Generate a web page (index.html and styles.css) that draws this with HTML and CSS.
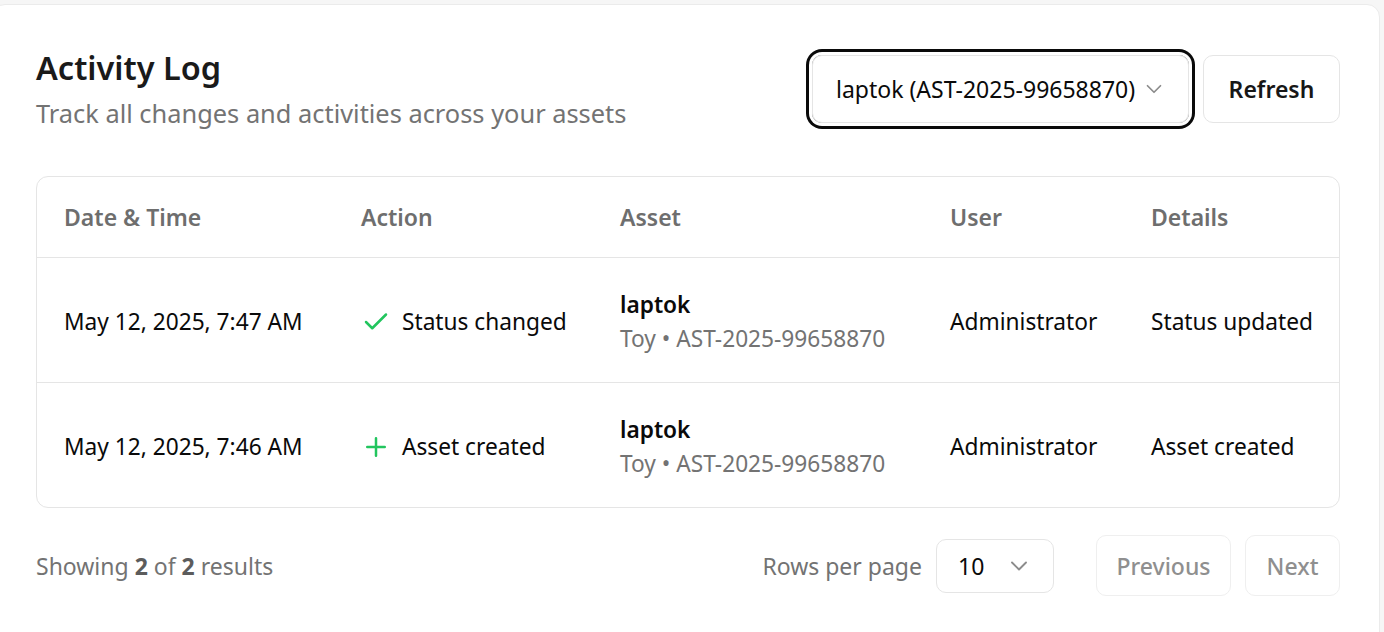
FILE: index.html
```html
<!DOCTYPE html>
<html lang="en">
<head>
<meta charset="utf-8">
<title>Activity Log</title>
<link rel="stylesheet" href="styles.css">
</head>
<body>
<div class="page">
  <section class="card">
    <header class="head">
      <div class="titles">
        <h1 class="title">Activity Log</h1>
        <p class="subtitle">Track all changes and activities across your assets</p>
      </div>
      <div class="controls">
        <div class="asset-select">
          <span class="sel-text">laptok (AST-2025-99658870)</span>
          <svg class="chev" viewBox="0 0 24 24" width="26" height="26"><path d="m6 9 6 6 6-6"/></svg>
        </div>
        <button class="btn refresh">Refresh</button>
      </div>
    </header>

    <div class="table-wrap">
      <table class="log">
        <colgroup>
          <col class="c1"><col class="c2"><col class="c3"><col class="c4"><col class="c5">
        </colgroup>
        <thead>
          <tr><th>Date &amp; Time</th><th>Action</th><th>Asset</th><th>User</th><th>Details</th></tr>
        </thead>
        <tbody>
          <tr>
            <td>May 12, 2025, 7:47 AM</td>
            <td><div class="action"><svg class="ico" viewBox="0 0 24 24" width="30" height="30"><path d="M20 6 9 17l-5-5"/></svg>Status changed</div></td>
            <td><div class="asset-name">laptok</div><div class="asset-sub">Toy • AST-2025-99658870</div></td>
            <td>Administrator</td>
            <td>Status updated</td>
          </tr>
          <tr>
            <td>May 12, 2025, 7:46 AM</td>
            <td><div class="action"><svg class="ico" viewBox="0 0 24 24" width="30" height="30"><path d="M5 12h14M12 5v14"/></svg>Asset created</div></td>
            <td><div class="asset-name">laptok</div><div class="asset-sub">Toy • AST-2025-99658870</div></td>
            <td>Administrator</td>
            <td>Asset created</td>
          </tr>
        </tbody>
      </table>
    </div>

    <footer class="foot">
      <div class="showing">Showing <b>2</b> of <b>2</b> results</div>
      <div class="pager">
        <span class="rpp">Rows per page</span>
        <div class="rows-select">
          <span>10</span>
          <svg class="chev" viewBox="0 0 24 24" width="28" height="28"><path d="m6 9 6 6 6-6"/></svg>
        </div>
        <div class="nav">
          <button class="btn btn-disabled prev">Previous</button>
          <button class="btn btn-disabled next">Next</button>
        </div>
      </div>
    </footer>
  </section>
</div>
</body>
</html>
```

FILE: styles.css
```css
* { box-sizing: border-box; }
html, body { margin: 0; padding: 0; overflow: hidden; }
body {
  background: #f6f6f6;
  font-family: "Noto Sans", "Open Sans", sans-serif;
  color: #0a0a0a;
  font-size: 24px;
}
.page { padding: 4px 4px 0 0; }
.card {
  margin-left: -8px;
  background: #fff;
  border: 1px solid #ebebeb;
  border-radius: 13px;
  padding: 41px 39px 60px 43px;
}
.head {
  display: flex;
  justify-content: space-between;
  align-items: center;
}
.title {
  margin: 0;
  font-size: 32.5px;
  line-height: 44px;
  font-weight: 600;
  color: #1a1a1a;
}
.subtitle {
  margin: 5px 0 0;
  font-size: 25.4px;
  line-height: 36px;
  color: #737373;
}
.controls { display: flex; align-items: center; gap: 14px; }
.asset-select {
  width: 377px;
  height: 68px;
  display: flex;
  align-items: center;
  justify-content: space-between;
  padding: 0 21px 0 23px;
  border: 1px solid #e5e5e5;
  border-radius: 10px;
  box-shadow: 0 0 0 3px #fff, 0 0 0 6px #0a0a0a;
  font-size: 23px;
}
.sel-text { white-space: nowrap; }
.chev { flex: none; fill: none; stroke: #8c8c8c; stroke-width: 1.6; stroke-linecap: round; stroke-linejoin: round; }
.btn {
  font-family: inherit;
  font-size: 23px;
  font-weight: 600;
  color: #171717;
  background: #fff;
  border: 1px solid #e5e5e5;
  border-radius: 10px;
  height: 68px;
  padding: 0;
}
.refresh { width: 137px; }
.table-wrap {
  margin-top: 45px;
  border: 1px solid #e5e5e5;
  border-radius: 12px;
  overflow: hidden;
}
.log { width: 100%; border-collapse: collapse; table-layout: fixed; }
.c1 { width: 297px; } .c2 { width: 259px; } .c3 { width: 330px; } .c4 { width: 201px; }
.log th {
  text-align: left;
  font-weight: 600;
  color: #6e6e6e;
  font-size: 23px;
  line-height: 34px;
  padding: 23px 0 23px 27px;
  border-bottom: 1px solid #e5e5e5;
}
.log td {
  font-size: 22.7px;
  line-height: 34px;
  padding: 30px 0 26px 27px;
  vertical-align: middle;
  white-space: nowrap;
}
.log tbody tr + tr td { border-top: 1px solid #e5e5e5; }
.action { display: flex; align-items: center; gap: 11px; }
.ico { flex: none; fill: none; stroke: #22c55e; stroke-width: 2; stroke-linecap: round; stroke-linejoin: round; }
.asset-name { font-weight: 600; }
.asset-sub { color: #737373; }
.foot {
  margin-top: 27px;
  display: flex;
  justify-content: space-between;
  align-items: center;
}
.showing { color: #737373; font-size: 23px; }
.showing b { color: #5c5c5c; font-weight: 700; }
.pager { display: flex; align-items: center; }
.rpp { color: #737373; font-size: 23px; margin-right: 14px; }
.rows-select {
  width: 118px;
  height: 54px;
  display: flex;
  align-items: center;
  justify-content: space-between;
  padding: 0 20px 0 21px;
  border: 1px solid #e5e5e5;
  border-radius: 10px;
  font-size: 23px;
}
.nav { display: flex; gap: 14px; margin-left: 42px; }
.btn-disabled {
  height: 61px;
  font-weight: 500;
  color: #8f8f8f;
  border-color: #efefef;
}
.prev { width: 135px; }
.next { width: 95px; }
```
